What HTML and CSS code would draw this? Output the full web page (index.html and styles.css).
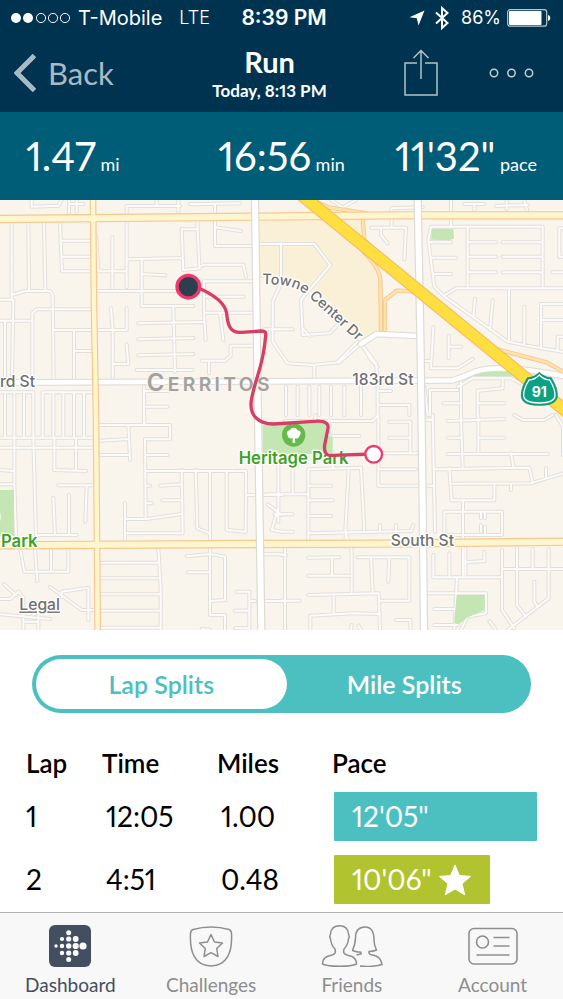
FILE: index.html
```html
<!DOCTYPE html>
<html lang="en">
<head>
<meta charset="utf-8">
<meta name="viewport" content="width=device-width, initial-scale=1">
<title>Run</title>
<link rel="stylesheet" href="styles.css">
</head>
<body>
<header class="top">
  <div class="status">
    <div class="status-left">
      <svg class="signal" viewBox="0 0 60 12" aria-hidden="true"><g fill="#fff"><circle cx="5" cy="6" r="5"/><circle cx="17" cy="6" r="5"/></g><g fill="none" stroke="#fff"><circle cx="30" cy="6" r="4.6"/><circle cx="42" cy="6" r="4.6"/><circle cx="54" cy="6" r="4.6"/></g></svg>
      <span>T-Mobile</span><span class="network">LTE</span>
    </div>
    <time class="clock">8:39 PM</time>
    <div class="status-right">
      <svg class="locate" viewBox="0 0 16 16" aria-hidden="true"><path d="M15.500 .5 9.500 15.500 7.800 8.200.5 7.200z" fill="#fff"/></svg>
      <svg class="bluetooth" viewBox="0 0 14 24" aria-hidden="true"><path d="M1 6.500 12.500 17 7 22V2l5.500 5L1 17.500" fill="none" stroke="#fff" stroke-width="2"/></svg>
      <span>86%</span>
      <svg class="battery" viewBox="0 0 44 18" aria-hidden="true"><rect x=".7" y=".7" width="39" height="16.500" rx="2.500" fill="none" stroke="#b9c7d0" stroke-width="1.200"/><rect x="2" y="2" width="32.500" height="14" rx="1" fill="#fff"/><path d="M41 6c3 .5 3 5.500 0 6z" fill="#fff"/></svg>
    </div>
  </div>
  <nav class="nav">
    <a class="back" href="#back"><svg viewBox="0 0 22 38" aria-hidden="true"><path d="M20.500 1.500 3 19l17.500 17.500" fill="none" stroke="currentColor" stroke-width="5"/></svg>Back</a>
    <div class="heading"><h1>Run</h1><p>Today, 8:13 PM</p></div>
    <div class="actions">
      <button type="button" aria-label="Share"><svg class="share" viewBox="0 0 36 48" aria-hidden="true"><path d="M14 14H2v32h32V14H22M18 30V2M10.500 9 18 1.500 25.500 9" fill="none" stroke="#b3c2cb" stroke-width="1.500"/></svg></button>
      <button type="button" aria-label="More"><svg class="more" viewBox="0 0 46 10" aria-hidden="true"><g fill="none" stroke="#c2ced5" stroke-width="1.500"><circle cx="5" cy="5" r="3.700"/><circle cx="22.500" cy="5" r="3.700"/><circle cx="40" cy="5" r="3.700"/></g></svg></button>
    </div>
  </nav>
</header>
<main>
  <section class="stats" aria-label="Run summary">
    <p><strong>1.47</strong> mi</p>
    <p><strong>16:56</strong> min</p>
    <p><strong>11'32"</strong> pace</p>
  </section>
  <svg class="map" viewBox="0 0 1689 1290" preserveAspectRatio="xMidYMid slice" role="img" aria-label="Route map">
    <defs>
      <g id="streets">
        <path d="M95 0V20L175 17 185 0M207 0V38M230 0V38M207 12H250M380 40V18H540M470 0V18M535 0V35M570 13L720 10M645 15V138H755M645 82L722 93M35 70V300M85 70L87 272M132 70L136 272M35 285L75 273H150L158 285 161 545M180 72L186 214H380M186 122H268M186 170H268M0 299H40L36 545M0 362H97M97 545V340L110 328H270M160 390H380V325M222 390V545M222 453H275M15 362V545M288 105L295 210M337 112V265M380 70V262M385 178L548 174M595 88H545L550 210 600 205M592 65L598 200M600 200L612 194H730L738 230M425 180V318H580M425 222L495 226M290 273H530M757 244H612V340L617 420M612 290H730M612 338H757M660 338L670 420M520 320L525 515M415 370L610 366M415 418L580 414M415 466L580 462M410 510H577M333 325L338 390V535M340 492H385L380 433M605 482H675L692 468V437H760M627 482V520M0 577H100V713M128 713V577H275M15 577V713M43 577V713M72 577V713M160 577V713M190 577V713M222 577V713M252 577V713M432 560V670M432 573H503M432 620H503"/>
        <g transform="translate(843 0)"><path d="M-65 132H100L148 195 60 300 65 405 145 400 175 370M0 130V250L-25 305V425L20 490 95 495 175 487 240 430M-50 388H35M65 385L85 408M100 495V540M240 430L285 490 290 545M170 485L230 425M240 430L270 480 290 500M240 560V645M290 560V645M15 560V645M50 560V645M85 560V645M115 560V645M150 560V645M190 560V645M290 573H330M290 615H385V645M332 80V25L425 22M270 83H375L370 178M300 83V105L320 130M510 0V80M450 80H785V265M560 80V260M450 80L442 120 460 260 490 290 575 350 680 425 780 445 846 455M445 127H510M450 173H525M455 222H510M560 127H645M665 127H785M560 170H645M665 170H785M560 217H645M665 217H785M846 85H835V170H846M815 217H846M492 285L525 265H846M582 297L577 350M635 300L627 390M684 265V425M730 320V435M780 445V312H846M780 360H846M830 450V410H846M457 382L450 505H530L575 477M503 407V475M503 440H540M430 483H450M150 0L185 22 225 0M550 12H610M580 12V30M677 0V28M645 18L740 15M730 0L738 30M530 560L575 535H690L740 560M665 535V565L590 572V645M590 610H670M447 645V570H530M540 545V645M487 610H540M430 560L440 645"/></g>
        <g transform="translate(0 645)"><path d="M0 68H280M0 98H280M43 68V210L48 365M100 68L108 365M163 68V165L258 168M228 68V165M0 165L43 168M0 208H43M175 211H280M260 211L256 320M160 248L165 360M207 240L207 360M108 360H230M300 30H510V73H435L437 310M433 0V30M385 30L390 135M300 77L385 72M302 120H385M435 120H503M437 168H738L737 350 680 345V168M437 212H450M437 265H455M545 165L548 355H377M587 165L592 340 630 355M375 265V375M377 312H440L545 297M480 212L545 208M487 256H545M630 168V600H675V645M740 240H765M62 408L73 470H205V405M153 405V470M105 400L112 498M0 552H30L55 530 70 548V645M12 508L48 540M150 516L245 585H285M265 615V518L185 530V545M0 598L150 612M70 620H115M115 600V645M300 443H475M300 490H478M300 538H482M300 587H482M300 638H482M475 398L482 520V645M560 424L632 417 675 425V555L632 558M563 472H630M710 530H748V645M748 558H765M705 587H748M705 640H748M790 418H846M790 558H846M835 150V320M790 240H846M803 268L846 300M835 280L815 345 846 350M605 642L630 645"/></g>
        <g transform="translate(843 645)"><path d="M0 65H5M12 18H275L292 0V212H455M145 15V60M155 63H235M103 0V15M155 110V158M82 375V163L240 158 250 350M82 212H150M82 256H155M80 303H150M203 163L193 350 212 405V530M35 160V238M-45 238H82M-20 298H35M0 350H35M82 355L390 348 397 330M297 330V348M345 330V348M325 20H388V110M325 68H388M292 115H410M292 163H405M455 0L462 350M432 14H455M540 0V20L545 155M500 18L670 12M592 0V110M500 68H540M592 68H670M500 117H800M690 115L697 155M460 163L745 158 755 205 515 206M795 160V185M505 160L512 256H640V206M690 206V225M755 203L846 175M546 256V480M490 350V290H663V360H500M600 290V310M612 290V310M600 330V350M612 335V358M700 0L725 15H790L815 0M825 0L846 35V120M12 400V645M0 420H15M82 428L175 427M153 425V480M82 482H210M230 427H385V557H297M270 427L275 530M325 427L322 500M82 540L293 535 297 645M158 540V595M88 645V602L218 595 297 597M0 557H55M195 350L193 395M210 645L212 630M345 615H388V645M232 632L240 645M457 420V487H660M505 415V485M553 400V480M553 442L610 438V410M663 405V585L700 640M708 395V570L735 605M755 402V460M803 402V550L680 645M665 462H846M760 500V560L770 575M528 488L520 645M435 535H615V595L560 605 540 645M460 582H520M460 630H530M625 618L645 645"/></g>
      </g>
      <g id="avenues"><path d="M0 548L750 544 1358 541Q1395 530 1425 515 1500 490 1689 528M1083 432L1130 402 1255 408"/></g>
      <g id="boulevards"><path d="M765 0L774 645 784 1290M1253 0L1261 400 1267 830 1272 1290"/></g>
      <g id="arterials"><path d="M0 57L755 50 1200 46H1689M0 1036L750 1032 1130 1031 1689 1025"/></g>
      <path id="meridian" d="M279 0L282 320 288 645 293 1290"/>
      <path id="ramps" d="M935 0L985 22 1100 40M1088 50L1093 120 1160 190M1090 155Q1140 205 1141 240L1143 390M1155 390V300L1190 272 1235 274M1480 445L1640 487 1689 515"/>
      <path id="freeway" d="M905-15L1700 635"/>
      <path id="towne-arc" d="M787 252C865 253 898 262 935 298L1095 444"/>
    </defs>
    <rect class="land" width="1689" height="1290"/>
    <path class="mall" d="M780 60H1088L1093 130 1135 210 1144 390 1088 420 990 305 900 245 780 235z"/>
    <use href="#streets" class="street-edge"/>
    <use href="#streets" class="street"/>
    <path class="park" d="M788 674L975 668 985 708 998 712V762H788zM0 870H42V1008H0zM1296 87H1360L1362 116 1348 121 1293 119zM1370 1185H1454V1230L1404 1252 1377 1272 1362 1270zM1415 528L1465 512H1545L1580 529z"/>
    <use href="#avenues" class="avenue-edge"/>
    <use href="#avenues" class="avenue"/>
    <use href="#ramps" class="ramp-edge"/>
    <use href="#ramps" class="ramp"/>
    <use href="#arterials" class="arterial-edge"/>
    <use href="#meridian" class="meridian-edge"/>
    <use href="#arterials" class="arterial"/>
    <use href="#meridian" class="meridian"/>
    <use href="#boulevards" class="boulevard-edge"/>
    <use href="#boulevards" class="boulevard"/>
    <use href="#freeway" class="freeway-edge"/>
    <use href="#freeway" class="freeway"/>
    <g class="shield"><path d="M1618 517C1632 530 1643 533 1654 533 1662 548 1673 565 1672 588 1671 605 1658 616 1618 616S1565 605 1564 588C1563 565 1574 548 1582 533 1593 533 1604 530 1618 517z"/><path class="shield-line" d="M1618 525C1630 537 1640 540 1649 540 1657 553 1666 568 1665 587 1664 600 1654 609 1618 609S1572 600 1571 587C1570 568 1579 553 1587 540 1596 540 1606 537 1618 525z"/><text x="1618" y="590">91</text></g>
    <g class="label">
      <text x="0" y="560">rd St</text>
      <text x="1057" y="555">183rd St</text>
      <text x="1172" y="1038">South St</text>
      <text class="curved"><textPath href="#towne-arc">Towne Center Dr</textPath></text>
      <text class="legal" x="58" y="1231">Legal</text>
    </g>
    <text class="city" x="440" y="572"><tspan class="city-initial">C</tspan>ERRITOS</text>
    <g class="label park-label">
      <text x="716" y="792">Heritage Park</text>
      <text x="3" y="1040">Park</text>
    </g>
    <path d="M0 935Q7 950 0 965z" fill="#fff" opacity=".6"/>
    <circle cx="881" cy="705" r="35" fill="#67b94c"/>
    <path d="M877 728L879 714C872 718 862 714 863 706 857 698 864 690 870 691 873 681 889 681 892 691 900 690 906 700 899 706 899 714 890 718 884 714L886 728z" fill="#fff"/>
    <path class="route" d="M590 262C645 285 675 310 680 340 683 375 690 400 725 397L785 393Q800 393 797 407C790 500 770 520 755 595 744 650 780 672 820 672L943 664Q992 660 983 690L974 735Q970 768 995 766L1119 762"/>
    <circle cx="565" cy="260" r="34" fill="#2d3e4e" stroke="#f0386c" stroke-width="10"/>
    <circle cx="1121" cy="763" r="25" fill="#fff" stroke="#f0386c" stroke-width="7"/>
  </svg>
  <section class="splits">
    <div class="segment">
      <button type="button" class="selected" aria-pressed="true">Lap Splits</button>
      <button type="button" aria-pressed="false">Mile Splits</button>
    </div>
    <table>
      <colgroup><col class="col-lap"><col class="col-time"><col class="col-miles"><col></colgroup>
      <thead><tr><th>Lap</th><th>Time</th><th>Miles</th><th>Pace</th></tr></thead>
      <tbody>
        <tr><td>1</td><td class="inset">12:05</td><td class="inset">1.00</td><td class="pace"><div class="bar" style="width:100%">12'05"</div></td></tr>
        <tr><td>2</td><td class="inset">4:51</td><td class="inset">0.48</td><td class="pace"><div class="bar best" style="width:77%">10'06"<svg viewBox="0 0 34 32" aria-label="Best pace"><path d="M17 1 21.300 11.500 32.500 12.400 24 19.700 26.700 30.800 17 25 7.300 30.800 10 19.700 1.500 12.400 12.700 11.500z" fill="#fff" stroke="#fff" stroke-linejoin="round"/></svg></div></td></tr>
      </tbody>
    </table>
  </section>
</main>
<nav class="tabs">
  <a class="active" href="#dashboard">
    <svg viewBox="0 0 62 42" aria-hidden="true"><rect x="10" width="42" height="42" rx="6" fill="#434f61"/><g fill="#fff"><circle cx="17" cy="21" r="1.700"/><circle cx="23" cy="14" r="2.100"/><circle cx="23" cy="21" r="2.200"/><circle cx="23" cy="28" r="2.200"/><circle cx="29.700" cy="7.700" r="2.500"/><circle cx="29.700" cy="14" r="2.600"/><circle cx="29.700" cy="21" r="2.700"/><circle cx="29.700" cy="28" r="2.600"/><circle cx="29.700" cy="34.400" r="2.500"/><circle cx="36.700" cy="14" r="2.900"/><circle cx="36.700" cy="21" r="3.100"/><circle cx="36.700" cy="28" r="2.900"/><circle cx="44" cy="21" r="3.600"/></g></svg>
    <span>Dashboard</span>
  </a>
  <a href="#challenges">
    <svg viewBox="0 0 62 42" aria-hidden="true"><g fill="none" stroke="#8e8e8e" stroke-width="1.500"><path d="M13 4.500Q31-.5 49 4.500 51.500 5.300 51.500 8.500C52.500 27 47 41 31 41S9.500 27 10.500 8.500Q10.500 5.300 13 4.500z"/><path stroke-linejoin="round" d="M31 9.500 34.500 17 42.500 18 36.700 23.500 38 31.500 31 27.700 24 31.500 25.300 23.500 19.500 18 27.500 17z"/></g></svg>
    <span>Challenges</span>
  </a>
  <a href="#friends">
    <svg viewBox="0 0 62 42" aria-hidden="true"><g fill="none" stroke="#8e8e8e" stroke-width="1.500" stroke-linejoin="round"><path d="M14 24C11 21 10 18 9.500 14 8 11 9 10 9.500 9 10 3 14 .8 18.500.8S27 3 27.500 9C28 10 29 11 27.500 14 27 18 26 21 23 24 22 28 23 29 26 30L31 31.500C34 33 35.500 36 35.500 39 29 42 8 42 1.500 39 1.500 36 3 33 6 31.500L11 30C14 29 15 28 14 24z"/><path d="M39 41C47 42 57 41 61 39.500 60 34 58 32 55 31L49.500 29.500Q47.500 28.500 48 26.500 52 26.500 55.500 25 53 20 53 15 53 2 44 2 34.500 2 34.500 13C34.500 18 33 22 31.500 25.500Q35 27.200 40 27.200V29Q37 29.500 35.500 30"/></g></svg>
    <span>Friends</span>
  </a>
  <a href="#account">
    <svg viewBox="0 0 62 42" aria-hidden="true"><g fill="none" stroke="#8e8e8e" stroke-width="1.600"><rect x="7" y="3.500" width="48" height="35.500" rx="5"/><circle cx="20.500" cy="17" r="6"/><path d="M31.500 12.500H47.500M31.500 21H47.500M14.500 30H47.500"/></g></svg>
    <span>Account</span>
  </a>
</nav>
</body>
</html>
```

FILE: styles.css
```css
* { box-sizing: border-box; }
body {
  margin: 0;
  min-height: 100vh;
  display: flex;
  flex-direction: column;
  background: #fff;
  color: #000;
  font-family: Lato, "Liberation Sans", sans-serif;
  font-variant-numeric: proportional-nums;
}
h1, p { margin: 0; }
button { border: 0; padding: 0; background: none; color: inherit; font: inherit; }
a { color: inherit; text-decoration: none; }
svg { display: block; }

.top { background: #00334f; color: #fff; }
.status {
  display: grid;
  grid-template-columns: 1fr auto 1fr;
  align-items: center;
  height: 36px;
  padding: 0 12px 0 11px;
  font: 18px/20px Inter, "Liberation Sans", sans-serif;
}
.status-left, .status-right { display: flex; align-items: center; }
.status-left { font-size: 20px; }
.status-right { justify-content: flex-end; }
.signal { width: 60px; margin-right: 7px; }
.network { margin-left: 17px; font-size: 18px; font-weight: 300; }
.clock { padding-left: 6px; font-size: 21px; font-weight: 600; }
.locate { width: 16px; margin-right: 10px; }
.bluetooth { width: 14px; margin-right: 12px; }
.battery { width: 44px; margin-left: 6px; }

.nav {
  display: grid;
  grid-template-columns: 20fr auto 21fr;
  height: 76px;
  padding: 0 28px 2px 14px;
}
.back { display: flex; align-items: center; gap: 12px; font-size: 31px; color: #a9bac5; }
.back svg { width: 22px; }
.heading { padding-top: 9px; text-align: center; }
.heading h1 { font-size: 29px; line-height: 34px; font-weight: 700; }
.heading p { font-size: 17px; line-height: 24px; font-weight: 700; }
.actions { display: flex; align-items: center; justify-content: flex-end; gap: 50px; }
.share { width: 36px; }
.more { width: 46px; }

.stats {
  display: grid;
  grid-template-columns: 1fr auto 1fr;
  align-items: center;
  height: 88px;
  padding: 0 26px;
  background: #005d78;
  color: #fff;
  font-size: 18px;
}
.stats strong { font-size: 40px; font-weight: 400; }
.stats p:last-child { text-align: right; }

.map { width: 100%; height: auto; }
.land { fill: #f9f4ec; }
.mall { fill: #faf0d7; }
.park { fill: #c3e6b3; }
.street-edge, .street, .avenue-edge, .avenue, .ramp-edge, .ramp,
.arterial-edge, .arterial, .meridian-edge, .meridian,
.boulevard-edge, .boulevard, .freeway-edge, .freeway, .route {
  fill: none;
  stroke-linecap: round;
  stroke-linejoin: round;
}
.street-edge { stroke: #e2e0db; stroke-width: 12px; }
.street { stroke: #fcfbf9; stroke-width: 6px; }
.avenue-edge { stroke: #dedad4; stroke-width: 20px; }
.avenue { stroke: #fff; stroke-width: 14px; }
.ramp-edge { stroke: #f7c58d; stroke-width: 13px; }
.ramp { stroke: #fde3ac; stroke-width: 8px; }
.arterial-edge { stroke: #f8c88f; stroke-width: 25px; }
.arterial { stroke: #fdf6cf; stroke-width: 18px; }
.meridian-edge { stroke: #f8c88f; stroke-width: 20px; }
.meridian { stroke: #fdf6cf; stroke-width: 13px; }
.boulevard-edge { stroke: #dedad4; stroke-width: 25px; }
.boulevard { stroke: #fff; stroke-width: 18px; }
.freeway-edge { stroke: #f5bd62; stroke-width: 39px; }
.freeway { stroke: #ffdf3f; stroke-width: 32px; }
.route { stroke: #d63f63; stroke-width: 10px; }
.label {
  font-family: Inter, "Liberation Sans", sans-serif;
  font-size: 47px;
  font-weight: 500;
  fill: #707070;
  stroke: #fff;
  stroke-width: 8px;
  stroke-linejoin: round;
  paint-order: stroke;
}
.curved { font-size: 43px; }
.legal { text-decoration: underline; }
.park-label { font-size: 50px; font-weight: 600; fill: #3ea122; }
.city {
  font-family: Inter, "Liberation Sans", sans-serif;
  font-size: 58px;
  font-weight: 600;
  letter-spacing: 10px;
  fill: #a3a19d;
  stroke: #f9f4ec;
  stroke-width: 6px;
  paint-order: stroke;
}
.city-initial { font-size: 72px; }
.shield { fill: #0aa184; stroke: #087c66; stroke-width: 2px; }
.shield-line { fill: none; stroke: #fff; stroke-width: 4px; }
.shield text {
  fill: #fff;
  stroke: none;
  font: 700 42px Inter, "Liberation Sans", sans-serif;
  text-anchor: middle;
}

.splits { padding: 25px 26px 1px; }
.segment {
  display: grid;
  grid-template-columns: 1fr 1fr;
  height: 58px;
  margin: 0 6px;
  padding: 4px;
  border-radius: 29px;
  background: #4cc0c1;
  color: #fff;
  font-size: 25px;
  font-weight: 600;
}
.segment button { border-radius: 25px; }
.segment .selected { background: #fff; color: #4cc0c1; margin-right: -5px; }

table { width: 100%; margin-top: 28px; border-collapse: collapse; table-layout: fixed; }
.col-lap { width: 76px; }
.col-time { width: 115px; }
.col-miles { width: 115px; }
th { height: 44px; padding: 0; text-align: left; font-size: 26px; line-height: 44px; font-weight: 600; }
td { height: 63px; padding: 7px 0; font-size: 28px; line-height: 49px; }
td.inset { padding-left: 4px; }
td.pace { padding-left: 2px; }
.bar {
  display: flex;
  align-items: center;
  gap: 6px;
  height: 49px;
  padding-left: 18px;
  border-radius: 1px;
  background: #4cc0c1;
  color: #fff;
}
.bar.best { background: #b1c430; }
.bar svg { width: 34px; }

.tabs {
  display: grid;
  grid-template-columns: repeat(4, 1fr);
  height: 87px;
  margin-top: auto;
  border-top: 1px solid #b2b2b2;
  background: #f8f8f8;
  color: #8e8e8e;
  font-size: 19px;
  line-height: 24px;
}
.tabs a { display: flex; flex-direction: column; align-items: center; gap: 6px; padding-top: 12px; }
.tabs .active { color: #434f61; }
.tabs svg { width: 62px; height: 42px; }
```
